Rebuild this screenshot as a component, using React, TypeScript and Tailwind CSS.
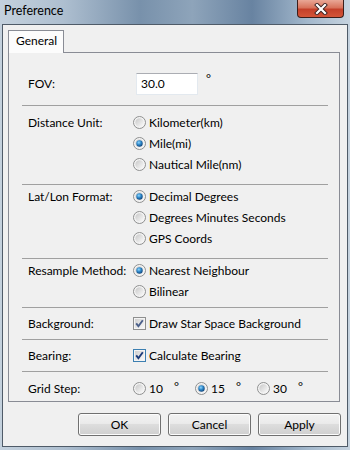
import React from 'react';

const FONT = { fontFamily: 'Lato, "Noto Sans", sans-serif' };

const Radio: React.FC<{ checked?: boolean }> = ({ checked }) => (
  <svg width="13" height="13" viewBox="0 0 13 13" className="shrink-0">
    <defs>
      <linearGradient id="rbIn" x1="0" y1="0" x2="1" y2="1">
        <stop offset="0" stopColor="#c8c8c8" />
        <stop offset="1" stopColor="#fbfbfb" />
      </linearGradient>
      <radialGradient id="rbDot" cx="0.4" cy="0.35" r="0.7">
        <stop offset="0" stopColor="#8fd7ff" />
        <stop offset="0.5" stopColor="#2b84c6" />
        <stop offset="1" stopColor="#0f3f73" />
      </radialGradient>
    </defs>
    <circle cx="6.5" cy="6.5" r="6" fill="#f4f4f4" stroke="#8e8f8f" strokeWidth="1" />
    <circle cx="6.5" cy="6.5" r="4.2" fill="url(#rbIn)" />
    {checked && <circle cx="6.5" cy="6.5" r="3.2" fill="url(#rbDot)" />}
  </svg>
);

const Check: React.FC<{ focus?: boolean }> = ({ focus }) => (
  <svg width="13" height="13" viewBox="0 0 13 13" className="shrink-0">
    <defs>
      <linearGradient id="cbIn" x1="0" y1="0" x2="1" y2="1">
        <stop offset="0" stopColor="#d0d0d0" />
        <stop offset="1" stopColor="#f8f8f8" />
      </linearGradient>
    </defs>
    <rect x="0.5" y="0.5" width="12" height="12" fill="#f4f4f4" stroke={focus ? '#3c7fb1' : '#8e8f8f'} />
    <rect x="2" y="2" width="9" height="9" fill="url(#cbIn)" />
    <path d="M3.2 6.4 L5.4 9.2 L9.8 3.2" fill="none" stroke={focus ? '#1c3b7a' : '#4a5f8a'} strokeWidth="1.9" />
  </svg>
);

const Opt: React.FC<{ checked?: boolean; label: string }> = ({ checked, label }) => (
  <div className="h-[21px] flex items-center gap-[3px]">
    <Radio checked={checked} />
    <span>{label}</span>
  </div>
);

const Sep = () => <div className="h-px bg-[#a0a0a0]" />;

const Label: React.FC<{ text: string }> = ({ text }) => (
  <div className="w-[111px] pl-[6px] shrink-0 h-[21px] flex items-center">{text}</div>
);

const Btn: React.FC<{ text: string }> = ({ text }) => (
  <button className="w-[83px] h-[23px] rounded-[3px] border border-[#707070] bg-[linear-gradient(to_bottom,#f2f2f2_0%,#ebebeb_45%,#dddddd_50%,#cfcfcf_100%)] shadow-[inset_0_0_0_1px_#fcfcfc] text-[12px] text-black">
    {text}
  </button>
);

export default function App() {
  return (
    <div
      className="w-[350px] h-[450px] flex flex-col bg-[linear-gradient(90deg,#c4d1dd_0%,#aebfd0_18%,#7891ab_40%,#8ea4ba_55%,#6883a1_72%,#a3b8cc_88%,#c6d3df_100%)] text-[12px] text-black"
      style={FONT}
    >
      {/* title bar */}
      <div className="h-[24px] flex items-start justify-between shrink-0">
        <span className="pl-[4px] pt-[2px] text-[12.5px] text-black">Preference</span>
        <div className="mr-[6px] w-[47px] h-[18px] rounded-b-[4px] border border-t-0 border-[#3b1e1b] bg-[linear-gradient(to_bottom,#e9a796_0%,#d8735c_45%,#c4402a_55%,#d45538_100%)] flex items-center justify-center">
          <svg width="14" height="12" viewBox="0 0 14 12">
            <path d="M3 2 L11 10 M11 2 L3 10" stroke="#3a2222" strokeWidth="4" strokeLinecap="square" />
            <path d="M3 2 L11 10 M11 2 L3 10" stroke="#ffffff" strokeWidth="2.2" strokeLinecap="square" />
          </svg>
        </div>
      </div>

      {/* client */}
      <div className="flex-1 mx-[2px] mb-[3px] border border-[#4f5b68] bg-[#f0f0f0] flex flex-col pl-[5px] pr-[7px] pt-[5px]">
        <div className="w-[56px] h-[23px] -mb-px relative z-10 border border-b-0 border-[#898c95] bg-[#fcfcfc] flex items-center pl-[7px] pb-[2px]">
          General
        </div>
        <div className="w-[332px] h-[350px] border border-[#898c95] bg-[#f0f0f0] pl-[13px] pr-[11px] flex flex-col">
          {/* FOV */}
          <div className="h-[52px] pt-[20px] flex">
            <div className="w-[111px] pl-[6px] shrink-0 h-[22px] flex items-center">FOV:</div>
            <div className="ml-[3px] w-[62px] h-[22px] bg-white border border-[#e3e9ef] border-t-[#abadb3] flex items-center pl-[4px]">30.0</div>
            <span className="ml-[8px] -mt-[3px]">°</span>
          </div>
          <Sep />
          <div className="h-[78px] pt-[6px] flex">
            <Label text="Distance Unit:" />
            <div className="flex flex-col">
              <Opt label="Kilometer(km)" />
              <Opt label="Mile(mi)" checked />
              <Opt label="Nautical Mile(nm)" />
            </div>
          </div>
          <Sep />
          <div className="h-[73px] pt-px flex">
            <Label text="Lat/Lon Format:" />
            <div className="flex flex-col">
              <Opt label="Decimal Degrees" checked />
              <Opt label="Degrees Minutes Seconds" />
              <Opt label="GPS Coords" />
            </div>
          </div>
          <Sep />
          <div className="h-[48px] pt-px flex">
            <Label text="Resample Method:" />
            <div className="flex flex-col">
              <Opt label="Nearest Neighbour" checked />
              <Opt label="Bilinear" />
            </div>
          </div>
          <Sep />
          <div className="h-[31px] pt-[5px] flex">
            <Label text="Background:" />
            <div className="h-[21px] flex items-center gap-[3px]">
              <Check />
              <span>Draw Star Space Background</span>
            </div>
          </div>
          <Sep />
          <div className="h-[31px] pt-[5px] flex">
            <Label text="Bearing:" />
            <div className="h-[21px] flex items-center gap-[3px]">
              <Check focus />
              <span>Calculate Bearing</span>
            </div>
          </div>
          <Sep />
          <div className="flex-1 pt-[6px] flex">
            <Label text="Grid Step:" />
            {[
              ['10', false],
              ['15', true],
              ['30', false],
            ].map(([v, c]) => (
              <div key={v as string} className="w-[62px] h-[21px] flex items-center gap-[3px]">
                <Radio checked={c as boolean} />
                <span>{v as string}</span>
                <span className="ml-[8px] -mt-[3px]">°</span>
              </div>
            ))}
          </div>
        </div>

        <div className="mt-[11px] -mr-px flex justify-end gap-[7px]">
          <Btn text="OK" />
          <Btn text="Cancel" />
          <Btn text="Apply" />
        </div>
      </div>
    </div>
  );
}
